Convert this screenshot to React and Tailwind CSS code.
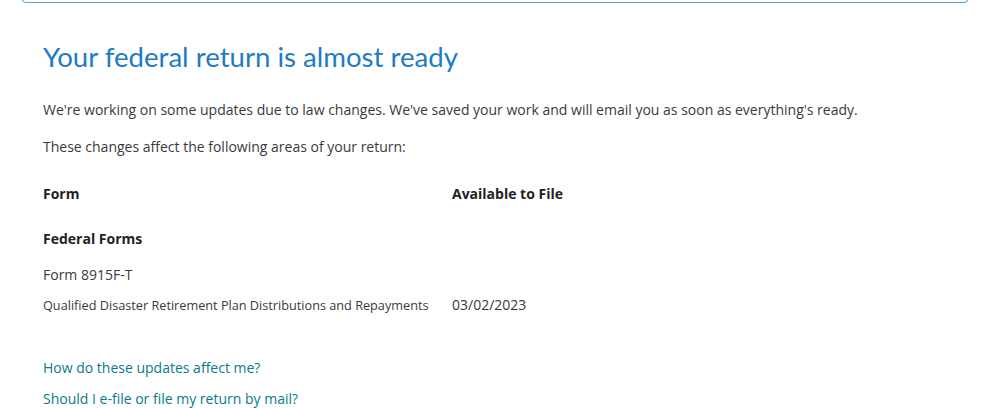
export default function App() {
  return (
    <div className="min-h-[408px] bg-white text-[#393a3d]" style={{ fontFamily: '"Open Sans", "Liberation Sans", sans-serif' }}>
      <div className="mx-[22px] w-[946px] h-[4px] -mt-[1px] rounded-b-[6px] border border-t-0 border-[#5aa8d6]" />
      <div className="pl-[43px]">
        <h1 className="pt-[36px] text-[27.6px] leading-[36px] font-normal text-[#1e7cc4]" style={{ fontFamily: 'Lato, "Open Sans", sans-serif' }}>Your federal return is almost ready</h1>
        <p className="mt-[25px] text-[14px] leading-[20px]">We're working on some updates due to law changes. We've saved your work and will email you as soon as everything's ready.</p>
        <p className="mt-[17px] text-[14px] leading-[20px]">These changes affect the following areas of your return:</p>
        <div className="mt-[27px] grid grid-cols-[409px_1fr] text-[14px] leading-[20px]">
          <div className="font-bold text-[#222]">Form</div>
          <div className="font-bold text-[#222]">Available to File</div>
        </div>
        <div className="mt-[25px] text-[14px] leading-[20px] font-bold text-[#222]">Federal Forms</div>
        <div className="mt-[16px] text-[14px] leading-[20px]">Form 8915F-T</div>
        <div className="mt-[10px] grid grid-cols-[409px_1fr] items-center leading-[20px]">
          <div className="text-[12.7px]">Qualified Disaster Retirement Plan Distributions and Repayments</div>
          <div className="text-[14px]">03/02/2023</div>
        </div>
        <div className="mt-[43px] flex flex-col gap-[11px] text-[14px] leading-[20px] text-[#0a7b8c]">
          <a href="#">How do these updates affect me?</a>
          <a href="#">Should I e-file or file my return by mail?</a>
        </div>
      </div>
    </div>
  );
}
